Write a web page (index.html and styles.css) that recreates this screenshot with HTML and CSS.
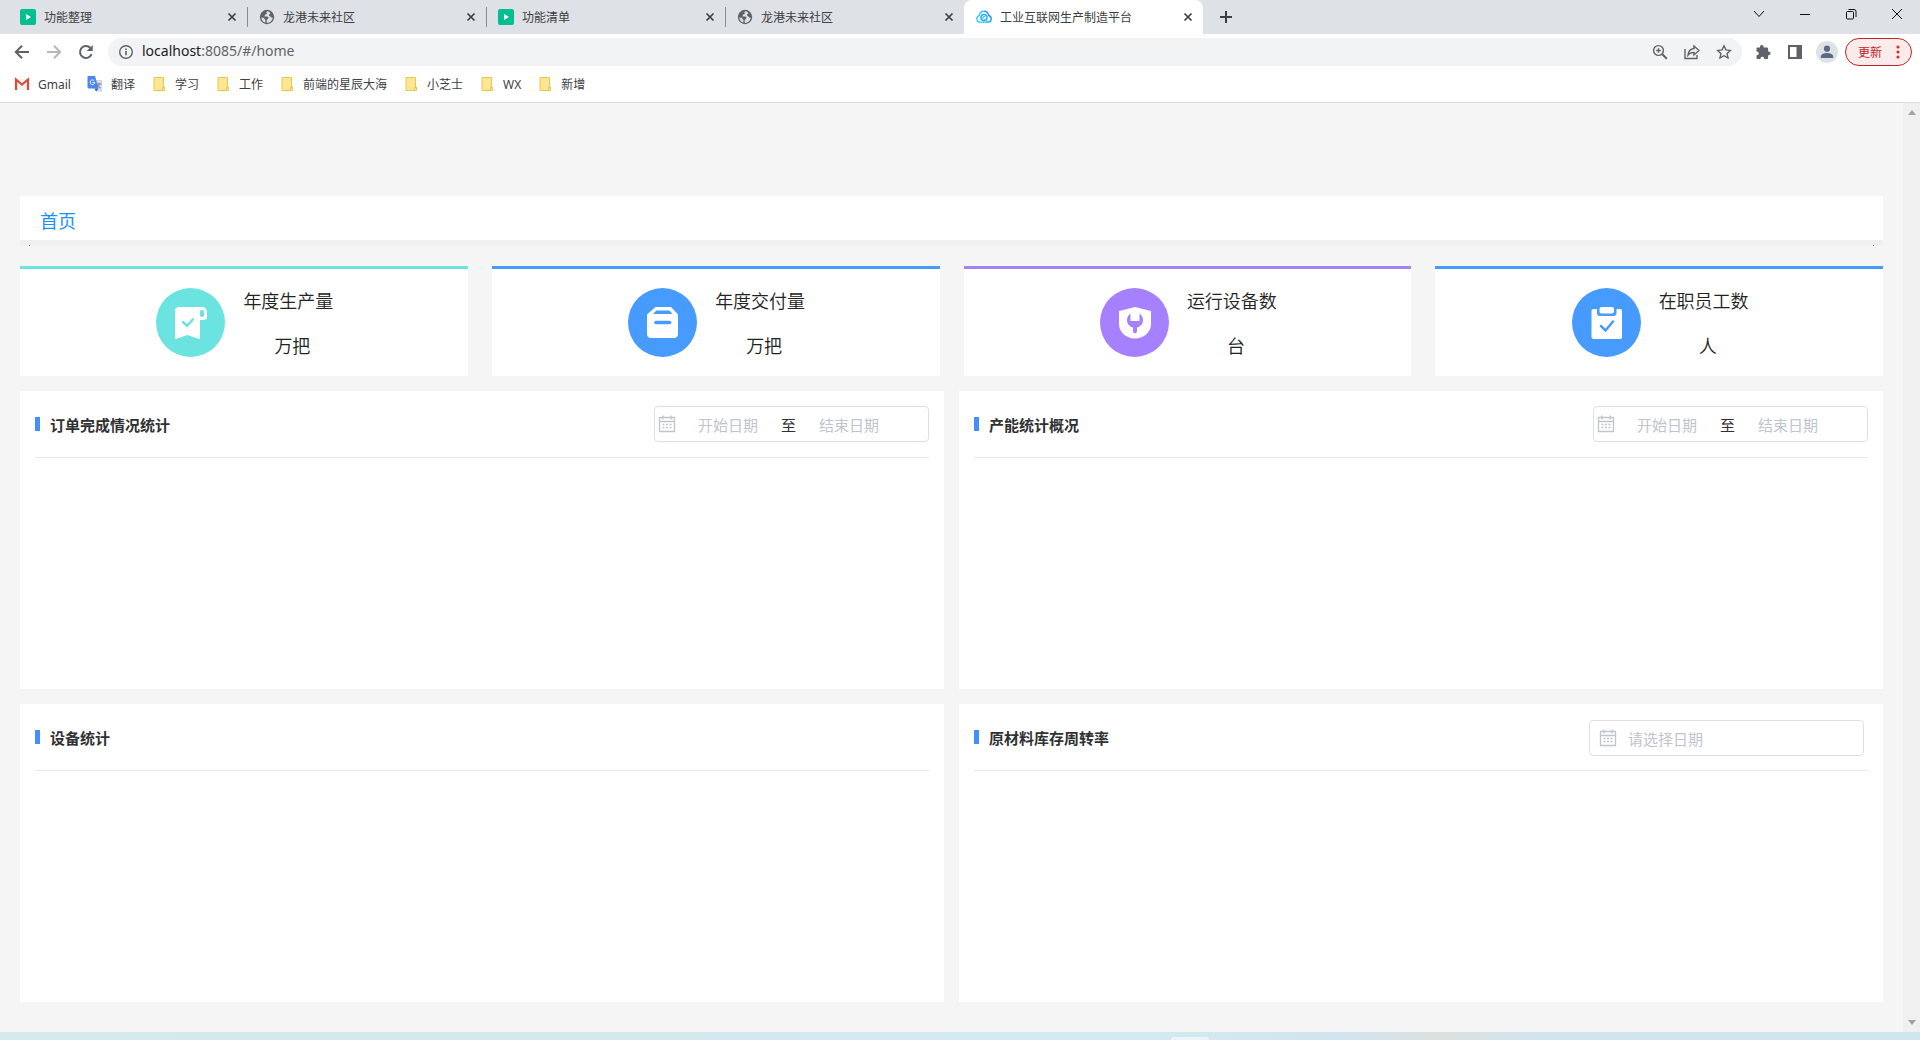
FILE: index.html
```html
<!DOCTYPE html>
<html lang="zh-CN">
<head>
<meta charset="utf-8">
<meta name="viewport" content="width=device-width, initial-scale=1">
<title>工业互联网生产制造平台</title>
<link rel="stylesheet" href="styles.css">
</head>
<body>
<svg class="defs" aria-hidden="true">
  <symbol id="i-close" viewBox="0 0 16 16"><path d="M4.5 4.5l7 7M11.5 4.5l-7 7" stroke="#3c4043" stroke-width="1.7" fill="none"/></symbol>
  <symbol id="i-play" viewBox="0 0 16 16"><rect width="16" height="16" rx="2" fill="#00c091"/><path d="M6 5l5 3-5 3z" fill="#fff"/></symbol>
  <symbol id="i-globe" viewBox="0 0 16 16"><circle cx="8" cy="8" r="7.2" fill="#5f6368"/><path d="M8.5 2.2c-1 .3-1.4 1.2-.8 2 .5.6-.2 1-1 1.1-.8.2-.5 1.2-1.2 1.5-.6.2.2.9 1.4.7 1.6-.2 2.8.3 2.6 1.5-.2 1-1.500 1-1.700 2.200-.2 1-.5 1.800.2 2.700 3-.2 5.600-2.600 5.800-5.500-.9.5-2 .2-2.300-.600-.3-.9-1.600-.6-1.600-1.700 0-.9 1-1.100 1.600-1.900-.8-1.200-1.900-1.800-3-2z" fill="#dee1e6"/><path d="M2.300 8.500c1.200.1 2.800.3 3.200 1.200.3.800 1.100 1 1 2 0 .9-.4 1.200-.3 1.900-2-.6-3.800-2.700-3.900-5.100z" fill="#dee1e6"/></symbol>
  <symbol id="i-folder" viewBox="0 0 16 16"><path d="M3 1.500h9.500v9.500h1v3.500H3z" fill="#ffe694" stroke="#edc748"/><path d="M11.500 14V11.500h1.500" fill="none" stroke="#edc748"/></symbol>
  <symbol id="i-calendar" viewBox="0 0 18 18"><path d="M1.500 2.500h15v14h-15zM1.500 6.500h15M5 .5v4M13 .5v4" stroke="currentColor" fill="none" stroke-width="1.300"/><path d="M4.500 9.500h2m1.500 0h2m1.500 0h2M4.500 12.500h2m1.500 0h2m1.500 0h2" stroke="currentColor" stroke-width="1.300"/></symbol>
</svg>

<header class="browser">
  <div class="tabstrip">
    <div class="tab">
      <svg class="ico"><use href="#i-play"/></svg><span class="tab-title">功能整理</span>
      <button class="plain" aria-label="关闭标签页"><svg class="ico"><use href="#i-close"/></svg></button>
    </div>
    <div class="tab">
      <svg class="ico"><use href="#i-globe"/></svg><span class="tab-title">龙港未来社区</span>
      <button class="plain" aria-label="关闭标签页"><svg class="ico"><use href="#i-close"/></svg></button>
    </div>
    <div class="tab">
      <svg class="ico"><use href="#i-play"/></svg><span class="tab-title">功能清单</span>
      <button class="plain" aria-label="关闭标签页"><svg class="ico"><use href="#i-close"/></svg></button>
    </div>
    <div class="tab">
      <svg class="ico"><use href="#i-globe"/></svg><span class="tab-title">龙港未来社区</span>
      <button class="plain" aria-label="关闭标签页"><svg class="ico"><use href="#i-close"/></svg></button>
    </div>
    <div class="tab tab-active">
      <svg class="ico" viewBox="0 0 16 16" fill="none" stroke-width="1.400"><path d="M4.500 13.200C2 13.200.8 11.600.8 9.800c0-1.600 1-2.900 2.500-3.200C3.600 4 5.500 2.300 8 2.300" stroke="#35cdf0"/><path d="M8 2.300c2.500 0 4.300 1.700 4.700 4.200 1.500.4 2.500 1.700 2.500 3.300 0 1.900-1.400 3.400-3.400 3.400" stroke="#2196f3"/><path d="M4.500 13.200h7.300" stroke="#35dcf0"/><circle cx="8" cy="8.600" r="3.100" stroke="#2aa8f5"/><path d="M6.800 9.800c0-1.500 1-2.400 2.400-2.400M8 10.200l4 2.600" stroke="#35cdf0"/></svg><span class="tab-title">工业互联网生产制造平台</span>
      <button class="plain" aria-label="关闭标签页"><svg class="ico"><use href="#i-close"/></svg></button>
    </div>
    <button class="plain new-tab" aria-label="新标签页"><svg class="ico" viewBox="0 0 16 16"><path d="M8 2v12M2 8h12" stroke="#3c4043" stroke-width="2"/></svg></button>
    <div class="window-controls">
      <button class="plain" aria-label="搜索标签页"><svg class="ico" viewBox="0 0 16 16"><path d="M3 5l5 5.500L13 5" class="thin"/></svg></button>
      <button class="plain" aria-label="最小化"><svg class="ico" viewBox="0 0 16 16"><path d="M3 8.500h10" class="thin"/></svg></button>
      <button class="plain" aria-label="还原"><svg class="ico" viewBox="0 0 16 16"><rect x="3.500" y="5.500" width="7" height="7.500" rx="1" class="thin"/><path d="M5.500 3.500h5.500a2 2 0 0 1 2 2v5.500" class="thin"/></svg></button>
      <button class="plain" aria-label="关闭"><svg class="ico" viewBox="0 0 16 16"><path d="M3 3l10 10M13 3L3 13" class="thin"/></svg></button>
    </div>
  </div>

  <div class="toolbar">
    <div class="nav">
      <button class="plain" aria-label="后退"><svg class="ico" viewBox="0 0 16 16"><path d="M15 8H2M8 1.800L1.800 8 8 14.200" class="line"/></svg></button>
      <button class="plain dim" aria-label="前进"><svg class="ico" viewBox="0 0 16 16"><path d="M1 8h13M8 1.800L14.200 8 8 14.200" class="line"/></svg></button>
      <button class="plain" aria-label="重新加载"><svg class="ico" viewBox="0 0 16 16"><path d="M13.600 10.200A6 6 0 1 1 12.300 3.800" class="line"/><path d="M14.700 1v6h-6z" fill="#5f6368"/></svg></button>
    </div>
    <div class="omnibox">
      <svg class="ico" viewBox="0 0 16 16"><circle cx="8" cy="8" r="6.300" fill="none" stroke="#5f6368" stroke-width="1.400"/><path d="M8 7v4.300M8 4.500v1.500" stroke="#5f6368" stroke-width="1.600"/></svg>
      <span class="url">localhost<span class="url-rest">:8085/#/home</span></span>
      <div class="omni-actions">
        <button class="plain" aria-label="缩放"><svg class="ico" viewBox="0 0 16 16"><circle cx="6.500" cy="6.500" r="4.900" class="mid"/><path d="M10 10l4.800 4.800" stroke="#5f6368" stroke-width="2"/><path d="M6.500 4.200v4.600M4.200 6.500h4.600" class="mid"/></svg></button>
        <button class="plain" aria-label="分享"><svg class="ico" viewBox="0 0 16 16"><path d="M1 5v9.500h12V11" class="mid"/><path d="M10 2l5 4.500-5 4.500V8.500c-3 0-4.700.8-6 2.500.4-3.700 2.500-6.200 6-6.500z" class="mid"/></svg></button>
        <button class="plain" aria-label="收藏"><svg class="ico" viewBox="0 0 16 16"><path d="M8 1.800l1.900 4.100 4.400.5-3.200 3 .9 4.500L8 11.700l-4 2.200.9-4.500-3.200-3 4.400-.5z" class="mid"/></svg></button>
      </div>
    </div>
    <div class="ext">
      <button class="plain" aria-label="扩展程序"><svg class="ico" viewBox="0 0 16 16"><path d="M6.800 1a1.900 1.900 0 0 1 1.900 1.900v.6h3.100c.8 0 1.300.6 1.300 1.300v2.600h.6a1.900 1.900 0 0 1 0 3.800h-.6v2.500c0 .8-.5 1.300-1.300 1.300H9.200v-.8a1.900 1.900 0 0 0-3.700 0v.8H2.800c-.8 0-1.300-.5-1.300-1.300v-2.500h.8a1.900 1.900 0 0 0 0-3.700h-.8V4.800c0-.8.500-1.300 1.300-1.300h2.100v-.6A1.900 1.900 0 0 1 6.800 1z" fill="#5f6368"/></svg></button>
      <button class="plain" aria-label="侧边栏"><svg class="ico" viewBox="0 0 16 16"><path d="M1 1h14v14H1zM3 3v10h6.500V3z" fill="#5f6368" fill-rule="evenodd"/></svg></button>
      <button class="plain avatar" aria-label="个人资料"><svg class="ico" viewBox="0 0 16 16"><circle cx="8" cy="4.700" r="3.100" fill="#5a6a86"/><path d="M1.800 14v-1.500c0-2.400 3.600-3.500 6.200-3.500s6.200 1.100 6.200 3.500V14z" fill="#5a6a86"/></svg></button>
    </div>
    <button class="update">更新<svg class="dots" viewBox="0 0 4 16"><circle cx="2" cy="3" r="1.600"/><circle cx="2" cy="8" r="1.600"/><circle cx="2" cy="13" r="1.600"/></svg></button>
  </div>

  <nav class="bookmarks" aria-label="书签">
    <a href="#gmail"><svg class="ico" viewBox="0 0 16 16"><path d="M2 3h12v11H2z" fill="#f1f1f1"/><path d="M2 14V3.500l6 5 6-5V14" fill="none" stroke="#d54b3d" stroke-width="2.200"/></svg>Gmail</a>
    <a href="#fanyi"><svg class="ico" viewBox="0 0 16 16"><path d="M6 4h9v11.500H9z" fill="#d5d8dc"/><path d="M9.500 8h5M12 7v1c0 2-1 3.500-2 4m.5-3c.5 1.500 2 2.700 3.200 3" stroke="#7a8290" fill="none"/><path d="M1 0h7l3.500 12.500H2A1.500 1.500 0 0 1 .5 11V1z" fill="#4a86ee"/><path d="M7.500 12.500h4L9 15.500z" fill="#2b5fc4"/><path d="M7.200 4.800A2.300 2.300 0 1 0 7.700 6.500H5.600" stroke="#fff" fill="none"/></svg>翻译</a>
    <a href="#xuexi"><svg class="ico"><use href="#i-folder"/></svg>学习</a>
    <a href="#gongzuo"><svg class="ico"><use href="#i-folder"/></svg>工作</a>
    <a href="#qianduan"><svg class="ico"><use href="#i-folder"/></svg>前端的星辰大海</a>
    <a href="#xiaozhishi"><svg class="ico"><use href="#i-folder"/></svg>小芝士</a>
    <a href="#wx"><svg class="ico"><use href="#i-folder"/></svg>WX</a>
    <a href="#xinzeng"><svg class="ico"><use href="#i-folder"/></svg>新增</a>
  </nav>
</header>

<div class="viewport">
  <main class="page">
    <nav class="crumbs" aria-label="导航"><a href="#/home">首页</a></nav>
    <div class="crumb-track" aria-hidden="true"><i></i><i></i></div>

    <section class="stats">
      <article class="stat teal">
        <svg class="badge" viewBox="0 0 69 69"><circle cx="34.500" cy="34.500" r="34.500" fill="#6be3e0"/><path d="M23 19h22.500c3.500 0 5.500 2 5.500 5v5.500c0 1.500-1 2.500-2.500 2.500H44v17.500c0 1-.6 1.500-1.500 1.200L31.500 47l-11 3.700c-.9.3-1.500-.2-1.500-1.200V23c0-2.500 1.500-4 4-4z" fill="#fff"/><rect x="44" y="22" width="4" height="7" rx="1.800" fill="#6be3e0"/><path d="M27 34l4 3.700 6-6.500" stroke="#6be3e0" stroke-width="2.400" fill="none" stroke-linecap="round"/></svg>
        <div class="stat-text"><h2>年度生产量</h2><p>万把</p></div>
      </article>
      <article class="stat blue">
        <svg class="badge" viewBox="0 0 69 69"><circle cx="34.500" cy="34.500" r="34.500" fill="#479bff"/><path d="M27.500 19h15.500l7 7.500V46c0 2.500-1.500 4-4 4H23c-2.500 0-4-1.500-4-4V26.500z" fill="#fff"/><path d="M28.500 22.500h13l3 3.500H25z" fill="#479bff"/><path d="M28 34.500h13.500" stroke="#479bff" stroke-width="3.600" stroke-linecap="round"/></svg>
        <div class="stat-text"><h2>年度交付量</h2><p>万把</p></div>
      </article>
      <article class="stat purple">
        <svg class="badge" viewBox="0 0 69 69"><circle cx="34.500" cy="34.500" r="34.500" fill="#a681ff"/><path d="M35 19l16 4v13c0 8-7 14.500-16 14.500S19 44 19 36V23z" fill="#fff"/><path d="M30.500 25.500c-2.300 1.500-3.500 4-3.500 6.500 0 4 2.500 6.600 6 7.600V43c0 3 4 3 4 0v-3.400c3.500-1 6-3.600 6-7.600 0-2.500-1.200-5-3.500-6.500V33h-9z" fill="#a681ff"/></svg>
        <div class="stat-text"><h2>运行设备数</h2><p>台</p></div>
      </article>
      <article class="stat blue">
        <svg class="badge" viewBox="0 0 69 69"><circle cx="34.500" cy="34.500" r="34.500" fill="#479bff"/><path d="M21.500 21H25v4c0 2 1 3 3 3h13.500c2 0 3-1 3-3v-4H48c1.500 0 2 .8 2 2v26c0 1.500-.8 2-2 2H22c-1.500 0-2.500-.8-2.500-2V23c0-1.200.7-2 2-2z" fill="#fff"/><rect x="27.500" y="19" width="14.500" height="6.500" rx="2" fill="#fff"/><path d="M29 38l4.500 4.500 7.500-9" stroke="#479bff" stroke-width="2.500" fill="none" stroke-linecap="round"/></svg>
        <div class="stat-text"><h2>在职员工数</h2><p>人</p></div>
      </article>
    </section>

    <section class="panels">
      <article class="panel">
        <header class="panel-head"><h3>订单完成情况统计</h3>
          <div class="picker range"><svg class="cal"><use href="#i-calendar"/></svg><input type="text" placeholder="开始日期" aria-label="订单开始日期"><span class="to">至</span><input type="text" placeholder="结束日期" aria-label="订单结束日期"></div>
        </header>
      </article>
      <article class="panel">
        <header class="panel-head"><h3>产能统计概况</h3>
          <div class="picker range"><svg class="cal"><use href="#i-calendar"/></svg><input type="text" placeholder="开始日期" aria-label="产能开始日期"><span class="to">至</span><input type="text" placeholder="结束日期" aria-label="产能结束日期"></div>
        </header>
      </article>
      <article class="panel">
        <header class="panel-head"><h3>设备统计</h3></header>
      </article>
      <article class="panel">
        <header class="panel-head"><h3>原材料库存周转率</h3>
          <div class="picker single"><svg class="cal"><use href="#i-calendar"/></svg><input type="text" placeholder="请选择日期" aria-label="周转率日期"></div>
        </header>
      </article>
    </section>
  </main>
  <div class="scrollbar" aria-hidden="true">
    <svg viewBox="0 0 8 5"><path d="M0 5l4-5 4 5z"/></svg>
    <svg viewBox="0 0 8 5"><path d="M0 0l4 5 4-5z"/></svg>
  </div>
</div>
<footer class="taskbar"><span class="task"></span></footer>
</body>
</html>
```
FILE: styles.css
```css
* { box-sizing: border-box; }

body {
  margin: 0;
  min-height: 100vh;
  display: flex;
  flex-direction: column;
  background: #f5f5f5;
  color: #303133;
  font-family: "Noto Sans", "Noto Sans CJK SC", sans-serif;
  font-size: 12px;
}

h2, h3, p { margin: 0; font-weight: normal; }
a { color: inherit; text-decoration: none; }
button, input { font: inherit; color: inherit; }

.defs { display: none; }
.ico { width: 16px; height: 16px; flex: none; display: block; }
.plain {
  display: flex;
  align-items: center;
  justify-content: center;
  padding: 0;
  border: 0;
  background: none;
}
.thin { fill: none; stroke: #111; stroke-width: 1; }
.line { fill: none; stroke: #5f6368; stroke-width: 2; }
.mid { fill: none; stroke: #5f6368; stroke-width: 1.4; }

/* Browser frame */
.browser { background: #fff; border-bottom: 1px solid #dadce0; color: #3c4043; }

.tabstrip { display: flex; height: 34px; padding-left: 8px; background: #dee1e6; }
.tab {
  flex: 0 1 239px;
  min-width: 0;
  display: flex;
  align-items: center;
  gap: 8px;
  padding: 0 7px 0 12px;
}
.tab + .tab { background: linear-gradient(#8a8d91, #8a8d91) left center / 1px 20px no-repeat; }
.tab + .tab-active { background: #fff; border-radius: 8px 8px 0 0; }
.tab-title { flex: 1; min-width: 0; overflow: hidden; white-space: nowrap; }
.new-tab { width: 46px; }
.window-controls { display: flex; height: 28px; margin-left: auto; }
.window-controls button { width: 46px; }

.toolbar { display: flex; align-items: center; height: 36px; padding: 0 8px 0 14px; }
.nav { display: flex; gap: 16px; margin-right: 14px; }
.dim { opacity: .45; }
.omnibox {
  flex: 1;
  display: flex;
  align-items: center;
  gap: 8px;
  height: 28px;
  padding: 0 10px;
  border-radius: 14px;
  background: #f1f3f4;
}
.url { flex: 1; font-size: 14px; line-height: 18px; padding-bottom: 2px; color: #202124; }
.url-rest { color: #5f6368; }
.omni-actions { display: flex; gap: 16px; }
.ext { display: flex; align-items: center; gap: 16px; margin: 0 7px 0 13px; }
.avatar { width: 22px; height: 22px; margin-left: -3px; border-radius: 50%; background: #dee1e6; }
.update {
  display: flex;
  align-items: center;
  gap: 14px;
  height: 28px;
  padding: 0 11px 0 12px;
  border: 1px solid #c5221f;
  border-radius: 14px;
  background: #faeceb;
  color: #c5221f;
}
.dots { width: 4px; height: 16px; fill: #d93025; }

.bookmarks { display: flex; align-items: center; gap: 16px; height: 32px; padding: 0 14px 4px; }
.bookmarks a { display: flex; align-items: center; gap: 8px; height: 28px; white-space: nowrap; }

/* Dashboard */
.viewport { flex: 1; display: flex; font-family: "Noto Sans CJK SC", sans-serif; }
.page {
  flex: 1;
  min-width: 0;
  display: flex;
  flex-direction: column;
  padding: 93px 20px 30px;
}
.crumbs {
  display: flex;
  align-items: center;
  height: 44px;
  padding: 4px 20px 0;
  background: #fff;
  color: #1890ff;
  font-size: 18px;
  line-height: 24px;
}
.crumb-track {
  display: flex;
  align-items: flex-end;
  justify-content: space-between;
  height: 6px;
  padding: 0 9px;
  background: #f0f0f0;
}
.crumb-track i { width: 1px; height: 1px; background: #888; }

.stats {
  display: grid;
  grid-template-columns: repeat(4, 1fr);
  gap: 24px;
  margin: 20px 0 15px;
}
.stat {
  display: flex;
  align-items: center;
  justify-content: center;
  gap: 18px;
  height: 110px;
  padding-left: 2px;
  border-top: 3px solid;
  background: #fff;
}
.teal { border-color: #6be3e0; }
.blue { border-color: #479bff; }
.purple { border-color: #a681ff; }
.badge { width: 69px; height: 69px; flex: none; }
.stat-text { font-size: 18px; line-height: 45px; }
.stat-text h2 { font-size: 18px; }
.stat-text p { padding-left: 8px; text-align: center; }
.stat-text h2, .stat-text p { font-weight: 350; color: #222; }

.panels {
  flex: 1;
  display: grid;
  grid-template-columns: 1fr 1fr;
  grid-auto-rows: minmax(298px, 1fr);
  gap: 15px;
}
.panel { padding: 15px; background: #fff; }
.panel-head {
  display: flex;
  align-items: flex-start;
  justify-content: space-between;
  height: 52px;
  border-bottom: 1px solid #e8e8e8;
}
.panel-head h3 {
  display: flex;
  align-items: center;
  gap: 10px;
  height: 36px;
  font-size: 15px;
  font-weight: bold;
}
.panel-head h3::before { content: ""; width: 5px; height: 14px; background: #448fff; }

.picker {
  display: flex;
  align-items: center;
  width: 275px;
  height: 36px;
  border: 1px solid #dcdfe6;
  border-radius: 4px;
  background: #fff;
  font-size: 15px;
}
.picker input {
  min-width: 0;
  padding: 0;
  border: 0;
  outline: 0;
  background: none;
}
.picker ::placeholder { color: #c0c4cc; opacity: 1; }
.cal { width: 18px; height: 18px; flex: none; color: #c0c4cc; }
.range { padding-left: 3px; }
.range input { width: 104px; text-align: center; }
.range .to { width: 17px; text-align: center; }
.single { margin: 1px 4px 0 0; padding-left: 9px; gap: 11px; }
.single input { flex: 1; }

.scrollbar {
  width: 17px;
  display: flex;
  flex-direction: column;
  align-items: center;
  justify-content: space-between;
  padding: 7px 0;
  background: #f0f0f0;
}
.scrollbar svg { width: 8px; height: 5px; fill: #a3a3a3; }

.taskbar {
  display: flex;
  align-items: flex-end;
  justify-content: center;
  height: 8px;
  padding-left: 460px;
  background: linear-gradient(90deg, #d5e9ee, #d3eaf0 60%, #d2e4ef 70%, #dbe1df 75%, #d2e4ee 80%, #cfe6ee);
}
.task { width: 38px; height: 3px; border-radius: 3px 3px 0 0; background: #ecf5fa; }
```
